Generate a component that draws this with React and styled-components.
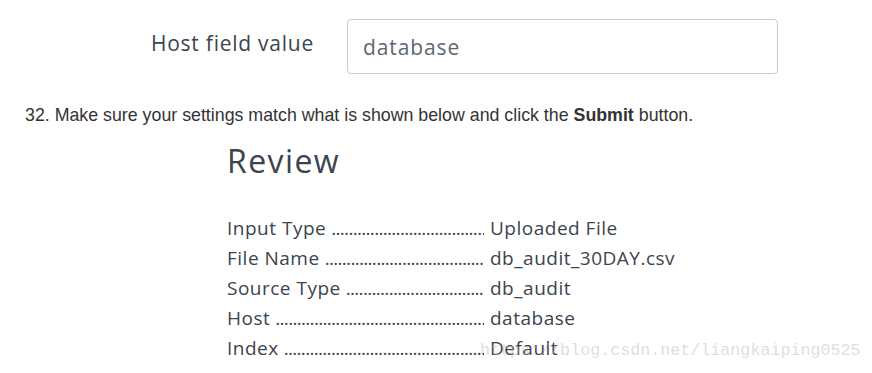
import React from "react";
import styled, { createGlobalStyle } from "styled-components";

const Global = createGlobalStyle`
  body {
    margin: 0;
    background: #ffffff;
    font-family: "Open Sans", "Liberation Sans", sans-serif;
  }
`;

const Page = styled.div`
  position: relative;
  width: 872px;
  height: 373px;
  overflow: hidden;
  background: #fff;
`;

const FieldRow = styled.div`
  display: flex;
  align-items: center;
  padding: 19px 0 0 151px;
`;

const FieldLabel = styled.label`
  width: 196px;
  font-size: 21px;
  letter-spacing: 0.75px;
  color: #3c444d;
  margin-top: -8px;
`;

const TextBox = styled.div`
  box-sizing: border-box;
  width: 431px;
  height: 55px;
  border: 1px solid #c3cbd4;
  border-radius: 4px;
  padding: 0 15px;
  display: flex;
  align-items: center;
  font-size: 21px;
  letter-spacing: 0.9px;
  color: #5c6773;
`;

const Step = styled.p`
  margin: 31px 0 0 25px;
  font-family: "Liberation Sans", Arial, sans-serif;
  font-size: 17.8px;
  color: #333;

  b {
    font-weight: bold;
  }
`;

const Review = styled.section`
  margin: 13px 0 0 227px;
`;

const Heading = styled.h2`
  margin: 0 0 31px;
  font-size: 32px;
  letter-spacing: 1.4px;
  font-weight: 400;
  color: #3c444d;
`;

const Row = styled.div`
  display: grid;
  grid-template-columns: 257px auto;
  column-gap: 6px;
  height: 30px;
  align-items: center;
  font-size: 19px;
  letter-spacing: 0.5px;
  color: #3c444d;
`;

const Key = styled.div`
  display: flex;
  overflow: hidden;
  white-space: nowrap;
`;

const Dots = styled.span`
  flex: 1;
  overflow: hidden;
  margin-left: 5px;
  font-size: 19px;
  letter-spacing: -0.7px;
`;

const Watermark = styled.div`
  position: absolute;
  left: 480px;
  top: 341px;
  font-family: "Liberation Mono", monospace;
  font-size: 16.7px;
  color: rgba(180, 180, 180, 0.45);
`;

const rows = [
  ["Input Type", "Uploaded File"],
  ["File Name", "db_audit_30DAY.csv"],
  ["Source Type", "db_audit"],
  ["Host", "database"],
  ["Index", "Default"],
];

export default function App() {
  return (
    <Page>
      <Global />
      <FieldRow>
        <FieldLabel>Host field value</FieldLabel>
        <TextBox>database</TextBox>
      </FieldRow>
      <Step>
        32. Make sure your settings match what is shown below and click the <b>Submit</b> button.
      </Step>
      <Review>
        <Heading>Review</Heading>
        {rows.map(([k, v]) => (
          <Row key={k}>
            <Key>
              {k}
              <Dots>{".".repeat(80)}</Dots>
            </Key>
            <div>{v}</div>
          </Row>
        ))}
      </Review>
      <Watermark>https://blog.csdn.net/liangkaiping0525</Watermark>
    </Page>
  );
}
